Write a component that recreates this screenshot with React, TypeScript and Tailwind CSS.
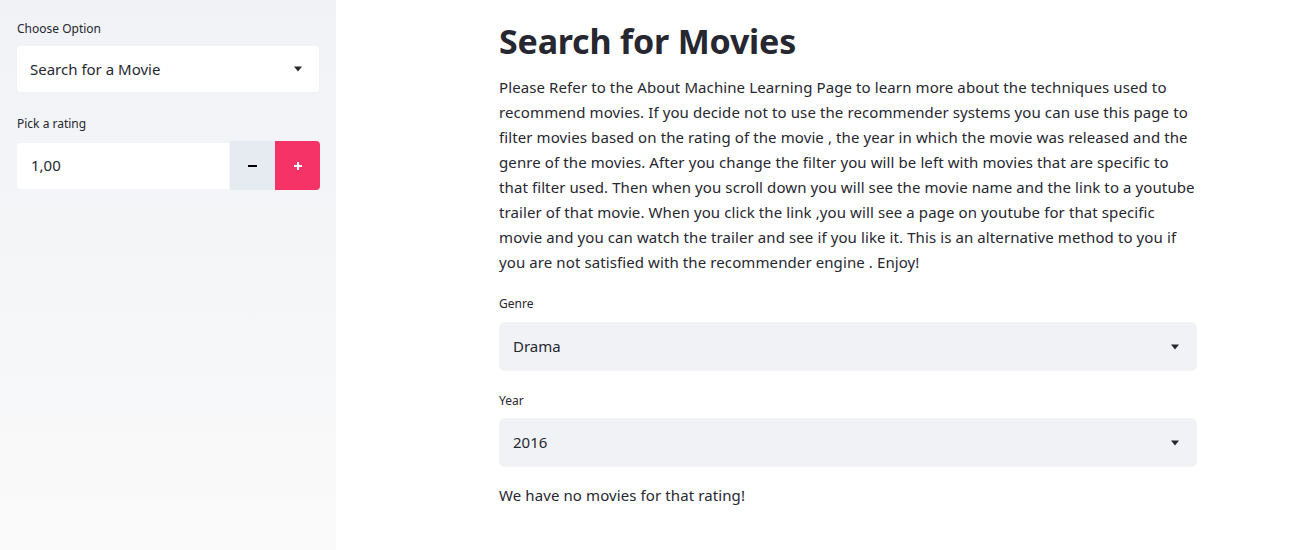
import React from "react";

const Caret = () => (
  <svg width="10" height="6" viewBox="0 0 10 6" className="shrink-0">
    <path d="M1 0.5 H9 L5 5.5 Z" fill="#262730" />
  </svg>
);

const lines = [
  "Please Refer to the About Machine Learning Page to learn more about the techniques used to",
  "recommend movies. If you decide not to use the recommender systems you can use this page to",
  "filter movies based on the rating of the movie , the year in which the movie was released and the",
  "genre of the movies. After you change the filter you will be left with movies that are specific to",
  "that filter used. Then when you scroll down you will see the movie name and the link to a youtube",
  "trailer of that movie. When you click the link ,you will see a page on youtube for that specific",
  "movie and you can watch the trailer and see if you like it. This is an alternative method to you if",
  "you are not satisfied with the recommender engine . Enjoy!",
];

export default function App() {
  return (
    <div
      className="flex h-[550px] w-full text-[#262730] bg-white"
      style={{ fontFamily: '"Noto Sans", "Open Sans", sans-serif' }}
    >
      <aside className="w-[336px] shrink-0 bg-gradient-to-b from-[#f0f2f6] to-[#fafafa] px-[17px] pt-[21px]">
        <div className="text-[12px] leading-[16px] mb-[9px]">Choose Option</div>
        <div className="flex h-[46px] w-[302px] items-center justify-between rounded-[4px] bg-white pl-[13px] pr-[16px] text-[15px]">
          <span>Search for a Movie</span>
          <Caret />
        </div>
        <div className="text-[12px] leading-[16px] mt-[24px] mb-[9px]">Pick a rating</div>
        <div className="flex h-[49px] w-[303px] items-center">
          <div className="flex h-[46px] w-[212px] items-center rounded-l-[4px] bg-white pl-[14px] text-[15px]">
            1,00
          </div>
          <div className="ml-[1px] flex h-[49px] w-[45px] items-center justify-center bg-[#e6eaf1]">
            <span className="block h-[2px] w-[9px] bg-black" />
          </div>
          <div className="flex h-[49px] w-[45px] items-center justify-center rounded-r-[4px] bg-[#f63366] text-white">
            <svg width="10" height="10" viewBox="0 0 10 10">
              <path d="M5 1 V9 M1 5 H9" stroke="white" strokeWidth="2" />
            </svg>
          </div>
        </div>
      </aside>
      <main className="flex-1 pl-[163px] pt-[18px]">
        <div className="w-[698px]">
          <h1 className="text-[34px] font-bold leading-[46px] tracking-[-0.2px]">Search for Movies</h1>
          <div className="mt-[11px] text-[15px] leading-[25px] tracking-[0.1px]">
            {lines.map((l, i) => (
              <div key={i} className="whitespace-nowrap">{l}</div>
            ))}
          </div>
          <div className="mt-[21px] text-[12px] leading-[16px]">Genre</div>
          <div className="mt-[10px] flex h-[49px] items-center justify-between rounded-[6px] bg-[#f0f2f6] pl-[14px] pr-[17px] text-[15px]">
            <span>Drama</span>
            <Caret />
          </div>
          <div className="mt-[22px] text-[12px] leading-[16px]">Year</div>
          <div className="mt-[9px] flex h-[49px] items-center justify-between rounded-[6px] bg-[#f0f2f6] pl-[14px] pr-[17px] text-[15px]">
            <span>2016</span>
            <Caret />
          </div>
          <div className="mt-[16px] text-[15px] leading-[25px] tracking-[0.1px]">We have no movies for that rating!</div>
        </div>
      </main>
    </div>
  );
}
